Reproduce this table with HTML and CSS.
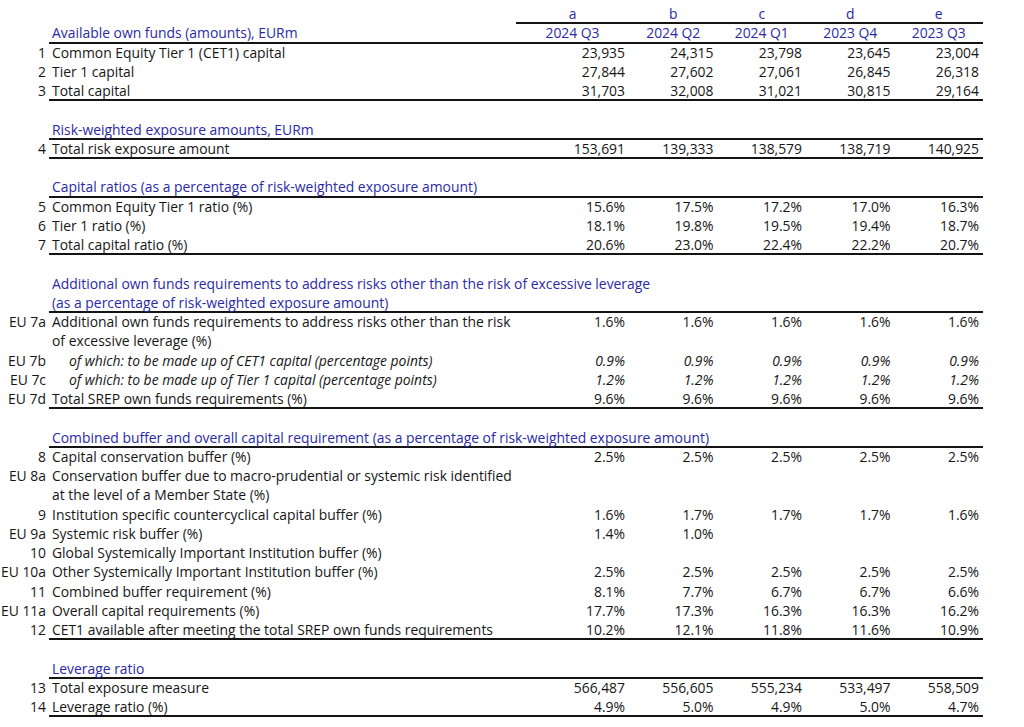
FILE: index.html
```html
<!DOCTYPE html>
<html lang="en">
<head>
<meta charset="utf-8">
<title>Key metrics</title>
<link rel="stylesheet" href="styles.css">
</head>
<body>
<div class="sheet">
  <div class="row">
    <div class="num"></div><div class="label"></div>
    <div class="col ruled">a</div><div class="col ruled">b</div><div class="col ruled">c</div><div class="col ruled">d</div><div class="col ruled">e</div>
  </div>
  <div class="row">
    <div class="num"></div><div class="label head ruled">Available own funds (amounts), EURm</div>
    <div class="col ruled">2024 Q3</div><div class="col ruled">2024 Q2</div><div class="col ruled">2024 Q1</div><div class="col ruled">2023 Q4</div><div class="col ruled">2023 Q3</div>
  </div>
  <div class="row"><div class="num">1</div><div class="label">Common Equity Tier 1 (CET1) capital</div><div class="val">23,935</div><div class="val">24,315</div><div class="val">23,798</div><div class="val">23,645</div><div class="val">23,004</div></div>
  <div class="row"><div class="num">2</div><div class="label">Tier 1 capital</div><div class="val">27,844</div><div class="val">27,602</div><div class="val">27,061</div><div class="val">26,845</div><div class="val">26,318</div></div>
  <div class="row ruled-row"><div class="num">3</div><div class="label">Total capital</div><div class="val">31,703</div><div class="val">32,008</div><div class="val">31,021</div><div class="val">30,815</div><div class="val">29,164</div></div>
  <div class="row"></div>

  <div class="row"><div class="num"></div><div class="section ruled">Risk-weighted exposure amounts, EURm</div></div>
  <div class="row ruled-row"><div class="num">4</div><div class="label">Total risk exposure amount</div><div class="val">153,691</div><div class="val">139,333</div><div class="val">138,579</div><div class="val">138,719</div><div class="val">140,925</div></div>
  <div class="row"></div>

  <div class="row"><div class="num"></div><div class="section ruled">Capital ratios (as a percentage of risk-weighted exposure amount)</div></div>
  <div class="row"><div class="num">5</div><div class="label">Common Equity Tier 1 ratio (%)</div><div class="val">15.6%</div><div class="val">17.5%</div><div class="val">17.2%</div><div class="val">17.0%</div><div class="val">16.3%</div></div>
  <div class="row"><div class="num">6</div><div class="label">Tier 1 ratio (%)</div><div class="val">18.1%</div><div class="val">19.8%</div><div class="val">19.5%</div><div class="val">19.4%</div><div class="val">18.7%</div></div>
  <div class="row ruled-row"><div class="num">7</div><div class="label">Total capital ratio (%)</div><div class="val">20.6%</div><div class="val">23.0%</div><div class="val">22.4%</div><div class="val">22.2%</div><div class="val">20.7%</div></div>
  <div class="row"></div>

  <div class="row"><div class="num"></div><div class="section">Additional own funds requirements to address risks other than the risk of excessive leverage</div></div>
  <div class="row"><div class="num"></div><div class="section ruled">(as a percentage of risk-weighted exposure amount)</div></div>
  <div class="row"><div class="num">EU 7a</div><div class="label">Additional own funds requirements to address risks other than the risk</div><div class="val">1.6%</div><div class="val">1.6%</div><div class="val">1.6%</div><div class="val">1.6%</div><div class="val">1.6%</div></div>
  <div class="row"><div class="num"></div><div class="label">of excessive leverage (%)</div></div>
  <div class="row italic"><div class="num">EU 7b</div><div class="label sub">of which: to be made up of CET1 capital (percentage points)</div><div class="val">0.9%</div><div class="val">0.9%</div><div class="val">0.9%</div><div class="val">0.9%</div><div class="val">0.9%</div></div>
  <div class="row italic"><div class="num">EU 7c</div><div class="label sub">of which: to be made up of Tier 1 capital (percentage points)</div><div class="val">1.2%</div><div class="val">1.2%</div><div class="val">1.2%</div><div class="val">1.2%</div><div class="val">1.2%</div></div>
  <div class="row ruled-row"><div class="num">EU 7d</div><div class="label">Total SREP own funds requirements (%)</div><div class="val">9.6%</div><div class="val">9.6%</div><div class="val">9.6%</div><div class="val">9.6%</div><div class="val">9.6%</div></div>
  <div class="row"></div>

  <div class="row"><div class="num"></div><div class="section ruled">Combined buffer and overall capital requirement (as a percentage of risk-weighted exposure amount)</div></div>
  <div class="row"><div class="num">8</div><div class="label">Capital conservation buffer (%)</div><div class="val">2.5%</div><div class="val">2.5%</div><div class="val">2.5%</div><div class="val">2.5%</div><div class="val">2.5%</div></div>
  <div class="row"><div class="num">EU 8a</div><div class="label">Conservation buffer due to macro-prudential or systemic risk identified</div></div>
  <div class="row"><div class="num"></div><div class="label">at the level of a Member State (%)</div></div>
  <div class="row"><div class="num">9</div><div class="label">Institution specific countercyclical capital buffer (%)</div><div class="val">1.6%</div><div class="val">1.7%</div><div class="val">1.7%</div><div class="val">1.7%</div><div class="val">1.6%</div></div>
  <div class="row"><div class="num">EU 9a</div><div class="label">Systemic risk buffer (%)</div><div class="val">1.4%</div><div class="val">1.0%</div><div class="val"></div><div class="val"></div><div class="val"></div></div>
  <div class="row"><div class="num">10</div><div class="label">Global Systemically Important Institution buffer (%)</div></div>
  <div class="row"><div class="num">EU 10a</div><div class="label">Other Systemically Important Institution buffer (%)</div><div class="val">2.5%</div><div class="val">2.5%</div><div class="val">2.5%</div><div class="val">2.5%</div><div class="val">2.5%</div></div>
  <div class="row"><div class="num">11</div><div class="label">Combined buffer requirement (%)</div><div class="val">8.1%</div><div class="val">7.7%</div><div class="val">6.7%</div><div class="val">6.7%</div><div class="val">6.6%</div></div>
  <div class="row"><div class="num">EU 11a</div><div class="label">Overall capital requirements (%)</div><div class="val">17.7%</div><div class="val">17.3%</div><div class="val">16.3%</div><div class="val">16.3%</div><div class="val">16.2%</div></div>
  <div class="row ruled-row"><div class="num">12</div><div class="label">CET1 available after meeting the total SREP own funds requirements</div><div class="val">10.2%</div><div class="val">12.1%</div><div class="val">11.8%</div><div class="val">11.6%</div><div class="val">10.9%</div></div>
  <div class="row"></div>

  <div class="row"><div class="num"></div><div class="section ruled">Leverage ratio</div></div>
  <div class="row"><div class="num">13</div><div class="label">Total exposure measure</div><div class="val">566,487</div><div class="val">556,605</div><div class="val">555,234</div><div class="val">533,497</div><div class="val">558,509</div></div>
  <div class="row ruled-row"><div class="num">14</div><div class="label">Leverage ratio (%)</div><div class="val">4.9%</div><div class="val">5.0%</div><div class="val">4.9%</div><div class="val">5.0%</div><div class="val">4.7%</div></div>
</div>
</body>
</html>
```

FILE: styles.css
```css
html, body {
  margin: 0;
  padding: 0;
  background: #ffffff;
}

body {
  font-family: "Open Sans", "Noto Sans", sans-serif;
  font-size: 13.9px;
  color: #161616;
}

.sheet {
  padding-top: 5px;
  width: 983px;
}

.row {
  display: grid;
  grid-template-columns: 49px 467px 113px 88.5px 88.5px 88.5px 88.5px;
  height: 19.25px;
  line-height: 17px;
  white-space: nowrap;
}

.num {
  text-align: right;
  padding-right: 3px;
}

.label {
  padding-left: 3px;
}

.label.sub {
  padding-left: 20px;
}

.italic > .label,
.italic > .val {
  font-style: italic;
}

.val {
  text-align: right;
  padding-right: 4px;
}

.col {
  text-align: center;
  color: #2a2aa6;
}

.head,
.section {
  color: #2a2aa6;
}

.section {
  grid-column: 2 / -1;
  padding-left: 3px;
}

.ruled {
  box-shadow: inset 0 -2px 0 #141414;
}

.ruled-row > .label,
.ruled-row > .val {
  box-shadow: inset 0 -2px 0 #141414;
}
```
